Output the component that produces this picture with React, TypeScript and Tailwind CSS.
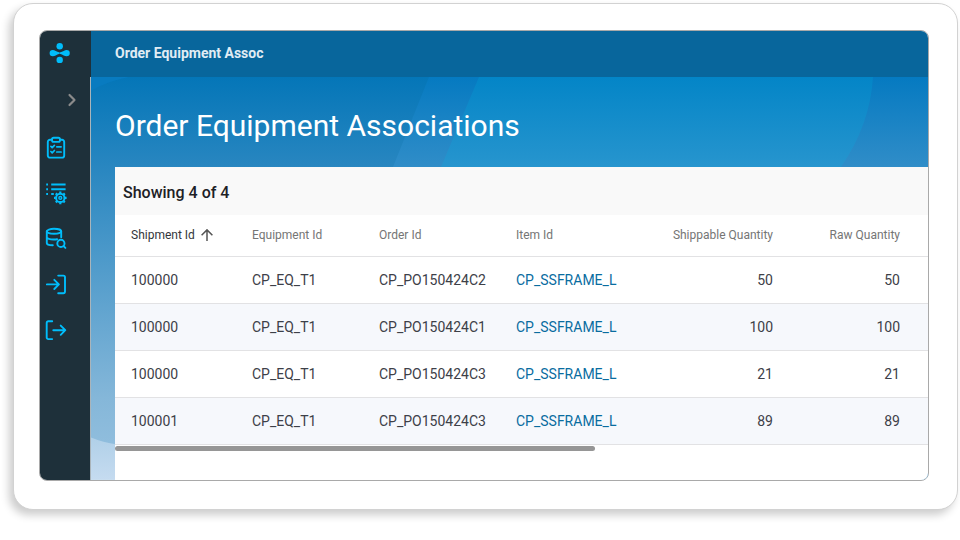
import React from 'react';
import { ChevronRight } from 'lucide-react';

interface Association {
  shipmentId: string;
  equipmentId: string;
  orderId: string;
  itemId: string;
  shippable: number;
  raw: number;
}

const rows: Association[] = [
  { shipmentId: '100000', equipmentId: 'CP_EQ_T1', orderId: 'CP_PO150424C2', itemId: 'CP_SSFRAME_L', shippable: 50, raw: 50 },
  { shipmentId: '100000', equipmentId: 'CP_EQ_T1', orderId: 'CP_PO150424C1', itemId: 'CP_SSFRAME_L', shippable: 100, raw: 100 },
  { shipmentId: '100000', equipmentId: 'CP_EQ_T1', orderId: 'CP_PO150424C3', itemId: 'CP_SSFRAME_L', shippable: 21, raw: 21 },
  { shipmentId: '100001', equipmentId: 'CP_EQ_T1', orderId: 'CP_PO150424C3', itemId: 'CP_SSFRAME_L', shippable: 89, raw: 89 },
];

const Logo = () => (
  <svg viewBox="0 0 24 24" className="size-6" fill="#00bdfb">
    <circle cx="11.7" cy="5.2" r="3.2" />
    <circle cx="11.7" cy="18.9" r="3.2" />
    <path d="M4.8 8.9c2 0 3.4 1.5 6.9 2.5v1.400C8.200 13.800 6.800 15.300 4.800 15.300a3.200 3.200 0 0 1 0-6.400z" />
    <path d="M18.600 8.900c-2 0-3.400 1.500-6.900 2.500v1.400c3.500 1 4.900 2.500 6.900 2.500a3.200 3.200 0 0 0 0-6.400z" />
  </svg>
);

const NavIcon = ({ children }: { children: React.ReactNode }) => (
  <svg
    viewBox="0 0 24 24"
    className="size-6"
    fill="none"
    stroke="#00bdfb"
    strokeWidth="1.9"
    strokeLinecap="round"
    strokeLinejoin="round"
  >
    {children}
  </svg>
);

const TasksIcon = () => (
  <NavIcon>
    <path d="M8 4.800H6a2.200 2.200 0 0 0-2.200 2.200v13.400a2.200 2.200 0 0 0 2.200 2.200h12a2.200 2.200 0 0 0 2.200-2.200V7A2.200 2.200 0 0 0 18 4.800h-2" />
    <rect x="8" y="2.700" width="8" height="4.200" rx="1.600" />
    <path d="M6.900 11.300l1.300 1.300 2.200-2.300M6.900 16.500l1.300 1.300 2.200-2.300M12.800 11.800h4.300M12.800 17h4.300" strokeWidth="1.700" />
  </NavIcon>
);

const ListSettingsIcon = () => (
  <NavIcon>
    <path d="M7.200 3.500h14.400M7.200 8.300h14.400M7.200 13h2.600" strokeLinecap="butt" />
    <path d="M2.200 3.500h1.800M2.200 8.300h1.800M2.200 13h1.800" strokeLinecap="butt" />
    <circle cx="16.300" cy="16.900" r="4.200" strokeWidth="2" />
    <circle cx="16.300" cy="16.900" r="1.400" strokeWidth="1.500" />
    <path
      d="M16.300 12.300v-1.700M16.300 21.500v1.700M11.700 16.900H10M20.900 16.900h1.700M13 13.600l-1.200-1.200M19.600 20.200l1.200 1.200M19.600 13.600l1.200-1.200M13 20.200l-1.200 1.200"
      strokeWidth="2.200"
      strokeLinecap="butt"
    />
  </NavIcon>
);

const DatabaseSearchIcon = () => (
  <NavIcon>
    <ellipse cx="10" cy="4.300" rx="7.200" ry="2.500" />
    <path d="M2.800 4.300v11.600c0 1.300 2.800 2.300 6 2.400M17.200 4.300v6M2.800 10.100c0 1.400 3 2.500 7.200 2.400 1.200 0 2.200-.1 3.100-.3" />
    <circle cx="16.900" cy="16.400" r="3.600" />
    <path d="M19.500 19l1.900 1.900" />
  </NavIcon>
);

const SignInIcon = () => (
  <NavIcon>
    <path d="M14.200 2.600h5.200a1.600 1.600 0 0 1 1.600 1.600v14.400a1.600 1.600 0 0 1-1.600 1.600h-5.200M2.900 11.400h11.600M10.300 6.800l4.600 4.600-4.600 4.600" />
  </NavIcon>
);

const SignOutIcon = () => (
  <NavIcon>
    <path d="M8.200 2.300H4.300a1.600 1.600 0 0 0-1.600 1.600v14.600a1.600 1.600 0 0 0 1.600 1.600h3.900M9.300 11.200h11.600M16.700 6.600l4.600 4.600-4.600 4.600" />
  </NavIcon>
);

const navItems = [
  { label: 'Tasks', Icon: TasksIcon },
  { label: 'List settings', Icon: ListSettingsIcon },
  { label: 'Data search', Icon: DatabaseSearchIcon },
  { label: 'Check in', Icon: SignInIcon },
  { label: 'Check out', Icon: SignOutIcon },
];

const SortArrow = () => (
  <svg viewBox="0 0 16 16" className="size-4" fill="none" stroke="#555" strokeWidth="1.5">
    <path d="M8 14V3M2.600 8.300L8 2.900l5.400 5.400" />
  </svg>
);

const Sidebar = () => (
  <nav className="w-[50px] shrink-0 bg-[#1e303a]">
    <div className="pl-2 pt-2.5">
      <Logo />
    </div>
    <button type="button" aria-label="Expand menu" className="ml-5 mt-[23px] flex size-6 items-center justify-center">
      <ChevronRight className="size-5 text-[#8b8b8b]" strokeWidth={2.600} />
    </button>
    <div className="mt-[23px] flex flex-col items-start gap-[22px] pl-1">
      {navItems.map(({ label, Icon }) => (
        <button key={label} type="button" aria-label={label}>
          <Icon />
        </button>
      ))}
    </div>
  </nav>
);

// Decorative backdrop behind the page title and the left gutter
const Backdrop = () => (
  <svg
    viewBox="0 0 837 403"
    preserveAspectRatio="none"
    className="absolute inset-0 h-full w-full"
    aria-hidden="true"
  >
    <defs>
      <linearGradient id="base" x1="0" y1="0" x2="0" y2="1">
        <stop offset="0" stopColor="#0476b8" />
        <stop offset="0.220" stopColor="#2886c0" />
        <stop offset="0.800" stopColor="#85b7d9" />
        <stop offset="1" stopColor="#98c2e0" />
      </linearGradient>
      <linearGradient id="band" gradientUnits="userSpaceOnUse" x1="0" y1="0" x2="0" y2="90">
        <stop offset="0" stopColor="#057ac1" />
        <stop offset="1" stopColor="#308dc8" />
      </linearGradient>
      <linearGradient id="disc" gradientUnits="userSpaceOnUse" x1="0" y1="0" x2="0" y2="90">
        <stop offset="0" stopColor="#0385c7" />
        <stop offset="1" stopColor="#2795ce" />
      </linearGradient>
      <linearGradient id="corner" x1="0" y1="0" x2="0" y2="1">
        <stop offset="0" stopColor="#b0d0e8" />
        <stop offset="1" stopColor="#c5dbf0" />
      </linearGradient>
    </defs>
    <rect width="837" height="403" fill="url(#base)" />
    <path d="M0 0H38Q14 5 0 14z" fill="#087bc0" />
    <path d="M338 0H837V403H177L302 90z" fill="url(#band)" />
    <path d="M388 0H782Q779 48 750 90L540 403H218L350 90z" fill="url(#disc)" />
    <path d="M0 361Q12 366 26 368V403H0z" fill="url(#corner)" />
  </svg>
);

const AssociationsTable = () => (
  <table className="w-full table-fixed border-collapse text-left">
    <colgroup>
      <col className="w-[121px]" />
      <col className="w-[127px]" />
      <col className="w-[137px]" />
      <col />
      <col className="w-[144px]" />
      <col className="w-[139px]" />
    </colgroup>
    <thead>
      <tr className="h-[41px] border-b border-[#e2e2e4] text-xs text-[#757575]">
        <th className="whitespace-nowrap pl-4 font-normal text-[#33363b]" aria-sort="ascending">
          <button type="button" className="flex items-center gap-1">
            Shipment Id
            <SortArrow />
          </button>
        </th>
        <th className="pl-4 font-normal">Equipment Id</th>
        <th className="pl-4 font-normal">Order Id</th>
        <th className="pl-4 font-normal">Item Id</th>
        <th className="whitespace-nowrap pr-4 text-right font-normal">Shippable Quantity</th>
        <th className="pr-7 text-right font-normal">Raw Quantity</th>
      </tr>
    </thead>
    <tbody>
      {rows.map((row, i) => (
        <tr key={i} className="h-[47px] border-b border-[#e2e2e4] text-sm text-[#3d4048] even:bg-[#f6f8fc]">
          <td className="pl-4">{row.shipmentId}</td>
          <td className="pl-4">{row.equipmentId}</td>
          <td className="pl-4">{row.orderId}</td>
          <td className="pl-4">
            <a href="#item" className="text-[#096c9f]">{row.itemId}</a>
          </td>
          <td className="pr-4 text-right">{row.shippable}</td>
          <td className="pr-7 text-right">{row.raw}</td>
        </tr>
      ))}
    </tbody>
  </table>
);

const App: React.FC = () => {
  return (
    <div className="pb-[31px] pl-[13px] pr-0.5 pt-[3px] font-['Roboto',sans-serif]">
      <div className="rounded-[20px] border border-[#d2d2d2] bg-white pb-7 pl-[25px] pr-7 pt-[26px] shadow-[-4px_5px_8px_rgba(0,0,0,0.2)]">
        <div className="flex overflow-hidden rounded-lg border border-[#a9a9a9]">
          <Sidebar />
          <div className="flex min-w-0 flex-1 flex-col">
            <header className="flex h-[46px] items-center border-l border-[#1e303a] bg-[#08669c] pb-0.5 pl-6 text-sm font-bold text-[#e0ecf4]">
              Order Equipment Assoc
            </header>
            <main className="relative flex-1 border-l border-[#aab4ba] pl-6">
              <Backdrop />
              <h1 className="relative pb-[23px] pt-[31px] text-[30px] leading-9 text-white">Order Equipment Associations</h1>
              <section className="relative bg-white">
                <h2 className="flex h-12 items-center bg-[#f9f9f9] pl-2 pt-1 text-base font-medium text-[#1d2126]">
                  Showing 4 of 4
                </h2>
                <AssociationsTable />
                <div className="h-[35px] pt-px">
                  <div className="h-[5px] w-[59%] rounded-full bg-[#969696]" />
                </div>
              </section>
            </main>
          </div>
        </div>
      </div>
    </div>
  );
};

export default App;
